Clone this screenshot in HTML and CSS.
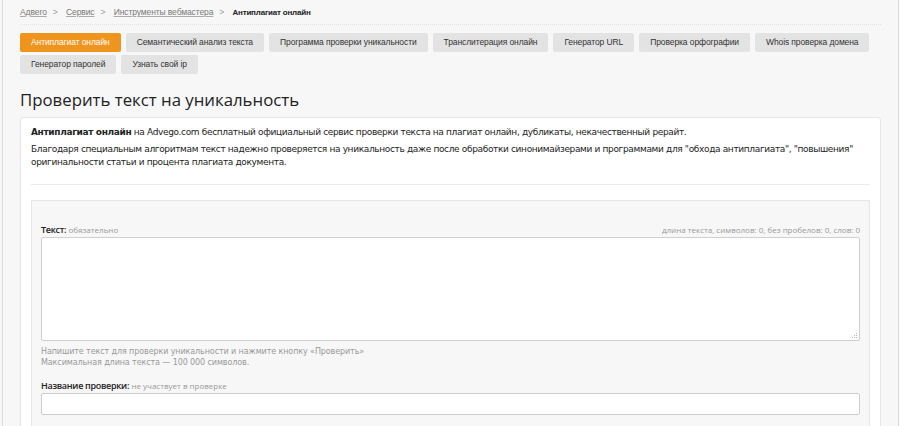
FILE: index.html
```html
<!DOCTYPE html>
<html lang="ru">
<head>
<meta charset="utf-8">
<title>Антиплагиат онлайн</title>
<link rel="stylesheet" href="styles.css">
</head>
<body>
<div class="page">
  <nav class="crumbs">
    <a href="#">Адвего</a><span class="sep">&gt;</span>
    <a href="#">Сервис</a><span class="sep">&gt;</span>
    <a href="#">Инструменты вебмастера</a><span class="sep">&gt;</span>
    <span class="current">Антиплагиат онлайн</span>
  </nav>
  <div class="tabs">
    <a class="tab active" href="#">Антиплагиат онлайн</a>
    <a class="tab" href="#">Семантический анализ текста</a>
    <a class="tab" href="#">Программа проверки уникальности</a>
    <a class="tab" href="#">Транслитерация онлайн</a>
    <a class="tab" href="#">Генератор URL</a>
    <a class="tab" href="#">Проверка орфографии</a>
    <a class="tab" href="#">Whois проверка домена</a>
    <a class="tab" href="#">Генератор паролей</a>
    <a class="tab" href="#">Узнать свой ip</a>
  </div>
  <h1 class="title">Проверить текст на уникальность</h1>
  <div class="card">
    <p class="lead"><b>Антиплагиат онлайн</b> на Advego.com бесплатный официальный сервис проверки текста на плагиат онлайн, дубликаты, некачественный рерайт.</p>
    <p class="lead">Благодаря специальным алгоритмам текст надежно проверяется на уникальность даже после обработки синонимайзерами и программами для "обхода антиплагиата", "повышения" оригинальности статьи и процента плагиата документа.</p>
    <div class="divider"></div>
    <div class="form">
      <div class="field-head">
        <span class="label"><b>Текст:</b> <span class="note">обязательно</span></span>
        <span class="count">длина текста, символов: 0, без пробелов: 0, слов: 0</span>
      </div>
      <div class="textarea">
        <svg class="grip" width="7" height="7" viewBox="0 0 7 7"><g fill="#bbb"><rect x="5" y="1" width="1" height="1"/><rect x="3" y="3" width="1" height="1"/><rect x="5" y="3" width="1" height="1"/><rect x="1" y="5" width="1" height="1"/><rect x="3" y="5" width="1" height="1"/><rect x="5" y="5" width="1" height="1"/></g></svg>
      </div>
      <div class="hint">Напишите текст для проверки уникальности и нажмите кнопку «Проверить»<br>Максимальная длина текста — 100 000 символов.</div>
      <div class="field-head second">
        <span class="label"><b>Название проверки:</b> <span class="note">не участвует в проверке</span></span>
      </div>
      <div class="input"></div>
    </div>
  </div>
</div>
</body>
</html>
```

FILE: styles.css
```css
html, body {
  margin: 0;
  padding: 0;
  background: #f7f7f7;
  height: 100%;
}
body {
  font-family: "DejaVu Sans", Verdana, sans-serif;
  color: #333;
  overflow: hidden;
}
.page {
  margin-left: 2px;
  border-left: 1px solid #dcdcdc;
  border-right: 1px solid #dcdcdc;
  width: 861px;
  padding: 0 17px;
  min-height: 100%;
  background: #f7f7f7;
}
.crumbs {
  font-family: "Liberation Sans", Arial, sans-serif;
  font-size: 8.5px;
  letter-spacing: -0.1px;
  height: 24px;
  line-height: 24px;
  border-bottom: 1px dotted #e2e2e2;
  color: #666;
}
.crumbs a {
  color: #777;
  text-decoration: underline;
  text-decoration-color: #aaa;
}
.crumbs .sep {
  color: #999;
  margin: 0 6px 0 6px;
}
.crumbs .current {
  color: #222;
  font-weight: 700;
  font-size: 8px;
  letter-spacing: -0.2px;
}
.tabs {
  display: flex;
  flex-wrap: wrap;
  gap: 3px 5px;
  margin-top: 8px;
}
.tab {
  display: block;
  height: 19px;
  line-height: 19px;
  padding: 0 11px;
  background: #e3e3e3;
  border-radius: 2px;
  font-family: "Liberation Sans", Arial, sans-serif;
  font-size: 8.5px;
  letter-spacing: -0.1px;
  color: #333;
  text-decoration: none;
}
.tab.active {
  background: #ef941d;
  color: #fff;
}
.title {
  margin: 12px 0 0;
  font-family: "Open Sans", sans-serif;
  font-weight: 400;
  font-size: 16.8px;
  line-height: 28px;
  color: #222;
}
.card {
  margin-top: 3px;
  background: #fff;
  border: 1px solid #e6e6e6;
  border-radius: 3px;
  padding: 8px 10px 0;
}
.lead {
  margin: 0 0 4px;
  font-size: 9px;
  letter-spacing: -0.35px;
  line-height: 13px;
  color: #222;
}
.divider {
  height: 1px;
  background: #ebebeb;
  margin: 15px 0 15px;
}
.form {
  background: #f7f7f7;
  border: 1px solid #e6e6e6;
  padding: 20px 9px 20px;
}
.field-head {
  display: flex;
  justify-content: space-between;
  align-items: flex-end;
  height: 16px;
  line-height: 15px;
  font-family: "Open Sans", sans-serif;
  font-size: 9px;
  color: #222;
}
.field-head b {
  font-weight: 600;
  letter-spacing: -0.3px;
}
.note, .count {
  color: #999;
  font-size: 8px;
}
.textarea {
  position: relative;
  height: 102px;
  background: #fff;
  border: 1px solid #cfcfcf;
  border-radius: 2px;
}
.grip {
  position: absolute;
  right: 1px;
  bottom: 1px;
}
.hint {
  margin-top: 5px;
  font-size: 8px;
  letter-spacing: -0.1px;
  line-height: 11px;
  color: #999;
}
.field-head.second {
  margin-top: 9px;
}
.input {
  height: 20px;
  background: #fff;
  border: 1px solid #cfcfcf;
  border-radius: 2px;
}
```
